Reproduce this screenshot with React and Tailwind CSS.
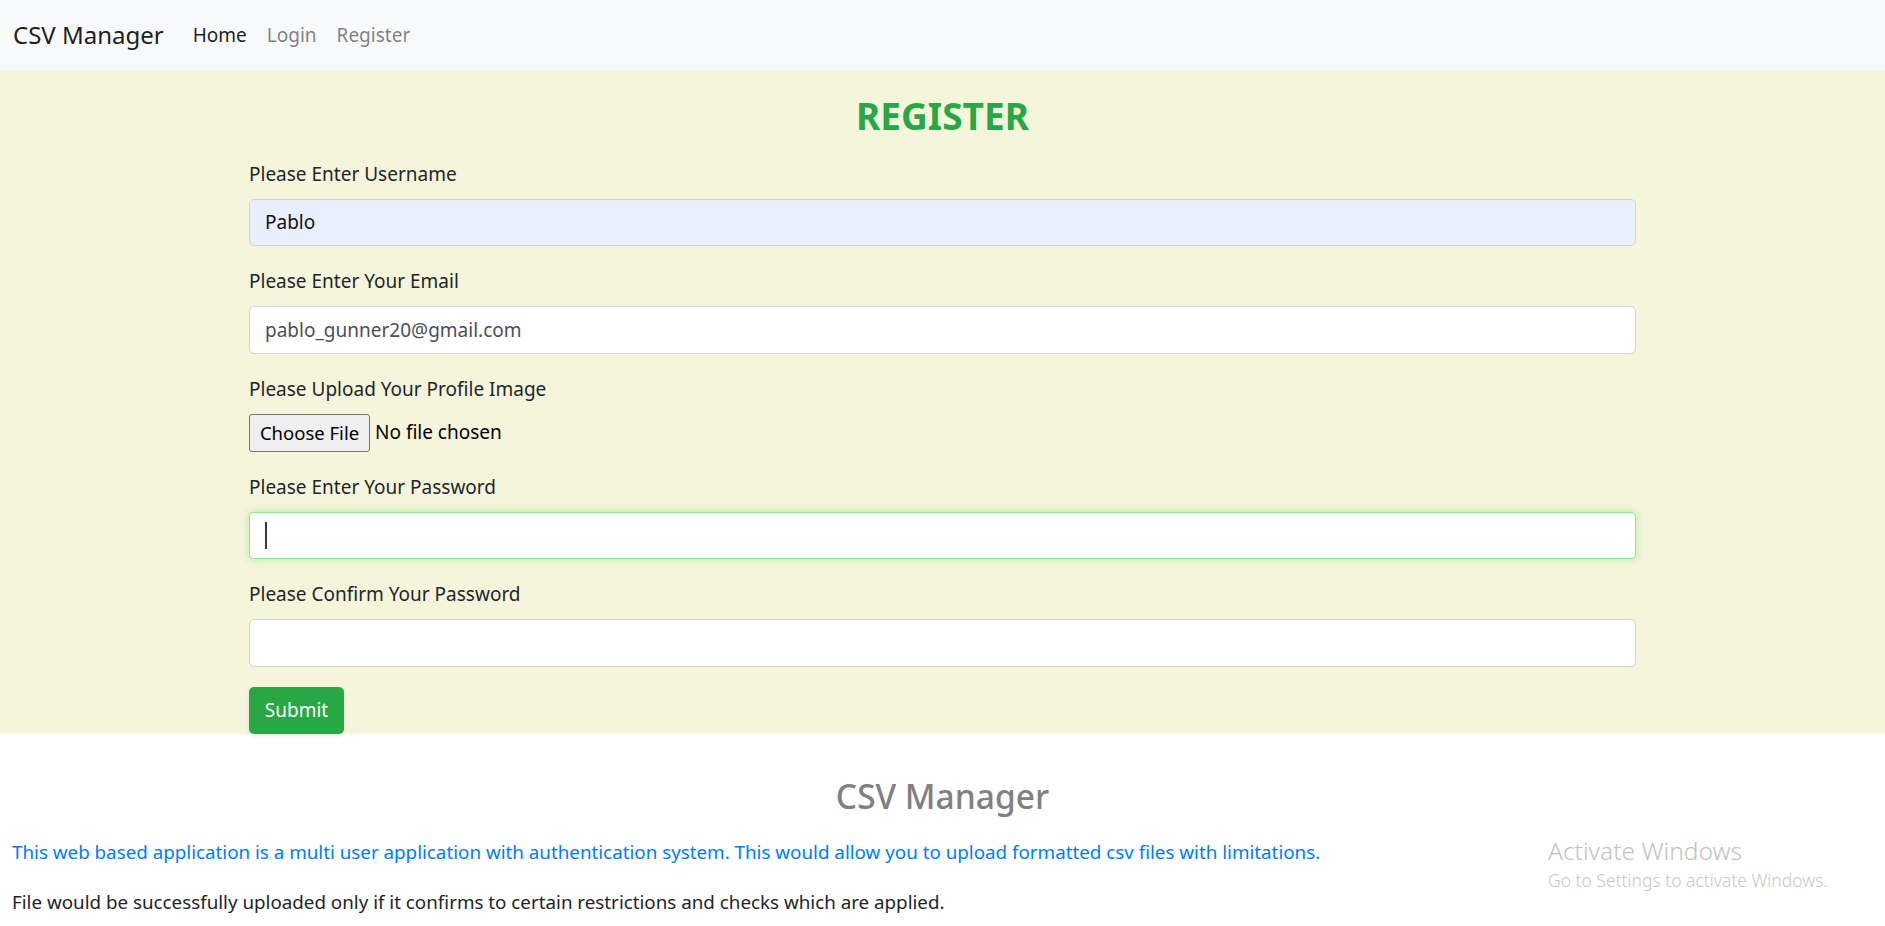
function Label({ children }) {
  return <div className="text-[19px] leading-[30px] mb-[10px] text-[#212529]">{children}</div>;
}

function Box({ className = '', children }) {
  return (
    <div className={`h-[47.5px] rounded-[5px] border px-[15px] flex items-center text-[19px] ${className}`}>
      {children}
    </div>
  );
}

export default function App() {
  return (
    <div className="relative min-h-screen bg-white" style={{ fontFamily: '"Noto Sans", "Open Sans", sans-serif' }}>
      <nav className="h-[70px] bg-[#f8f9fa] flex items-center pl-[13px]">
        <span className="text-[24px] text-[rgba(0,0,0,0.9)] mr-[19px]">CSV Manager</span>
        <span className="px-[10px] text-[19px] text-[rgba(0,0,0,0.9)]">Home</span>
        <span className="px-[10px] text-[19px] text-[rgba(0,0,0,0.5)]">Login</span>
        <span className="px-[10px] text-[19px] text-[rgba(0,0,0,0.5)]">Register</span>
      </nav>

      <section className="bg-[#f5f5dc] pt-[21.5px]">
        <div className="w-[1387px] mx-auto">
          <h2 className="text-center text-[37px] leading-[48px] font-bold text-[#28a745] mb-[19px]">REGISTER</h2>

          <div className="mb-[20px]">
            <Label>Please Enter Username</Label>
            <Box className="bg-[#e8f0fe] border-[#ced4da] text-[#111]">Pablo</Box>
          </div>

          <div className="mb-[20px]">
            <Label>Please Enter Your Email</Label>
            <Box className="bg-white border-[#ced4da] text-[#495057]">pablo_gunner20@gmail.com</Box>
          </div>

          <div className="mb-[20px]">
            <Label>Please Upload Your Profile Image</Label>
            <div className="flex items-center h-[38px]">
              <div className="h-[38px] w-[121px] flex items-center justify-center bg-[#efefef] border border-[#767676] rounded-[3px] text-[18.5px] text-black">
                Choose File
              </div>
              <span className="ml-[5px] text-[19px] text-black">No file chosen</span>
            </div>
          </div>

          <div className="mb-[20px]">
            <Label>Please Enter Your Password</Label>
            <Box className="bg-white border-[#8fe88f] shadow-[0_0_6px_2px_rgba(160,235,140,0.55)]">
              <div className="w-[2px] h-[27px] bg-[#3a3a3a]" />
            </Box>
          </div>

          <div className="mb-[20px]">
            <Label>Please Confirm Your Password</Label>
            <Box className="bg-white border-[#ced4da]" />
          </div>

          <button className="h-[47.5px] w-[95px] bg-[#28a745] text-white text-[19px] rounded-[5px] shadow-[0_2px_4px_rgba(0,0,0,0.08)]">
            Submit
          </button>
        </div>
      </section>

      <h3 className="mt-[41px] mb-[20px] text-center text-[33.5px] leading-[42px] font-medium text-[#808080]">CSV Manager</h3>
      <p className="pl-[12px] text-[18.8px] leading-[30px] text-[#007bff] mb-[20px]">
        This web based application is a multi user application with authentication system. This would allow you to upload formatted csv files with limitations.
      </p>
      <p className="pl-[12px] text-[18.8px] leading-[30px] text-[#212529]">
        File would be successfully uploaded only if it confirms to certain restrictions and checks which are applied.
      </p>

      <div className="absolute left-[1548px] top-[836px] pointer-events-none">
        <div className="text-[24.5px] leading-[30px] text-[#c2c2c2] font-light">Activate Windows</div>
        <div className="mt-[2px] text-[17.5px] leading-[24px] text-[#c8c8c8] font-light">Go to Settings to activate Windows.</div>
      </div>
    </div>
  );
}
